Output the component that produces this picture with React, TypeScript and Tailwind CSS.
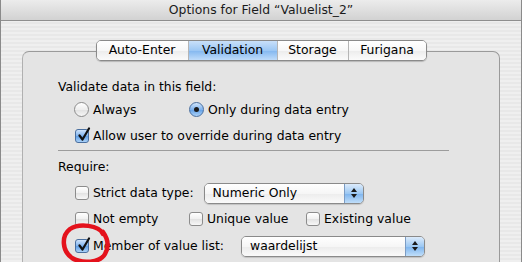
import React from "react";

const font = "font-['DejaVu_Sans',sans-serif] text-[12.4px] text-black";

function Check({ checked = false }: { checked?: boolean }) {
  return (
    <span
      className={
        "relative inline-block w-[14px] h-[14px] shrink-0 rounded-[3px] border " +
        (checked
          ? "border-[#4a6f9f] bg-[linear-gradient(#cfe3fa,#7fb3ee_50%,#5f9ee6_51%,#a9d0f7)]"
          : "border-[#8c8c8c] bg-[linear-gradient(#ffffff,#f0f0f0_50%,#e2e2e2_51%,#f7f7f7)]")
      }
    >
      {checked && (
        <svg className="absolute -top-[3px] left-[1px]" width="14" height="15" viewBox="0 0 14 15">
          <path d="M2.5 8.5 L5.5 12.5 L12 1.5" fill="none" stroke="#111" strokeWidth="2.2" strokeLinecap="round" strokeLinejoin="round" />
        </svg>
      )}
    </span>
  );
}

function Radio({ on = false }: { on?: boolean }) {
  return (
    <span
      className={
        "inline-flex items-center justify-center w-[15px] h-[15px] shrink-0 rounded-full border " +
        (on
          ? "border-[#4a6f9f] bg-[linear-gradient(#d2e6fb,#7fb3ee_50%,#5f9ee6_51%,#acd2f8)]"
          : "border-[#8c8c8c] bg-[linear-gradient(#ffffff,#eeeeee_50%,#e0e0e0_51%,#f7f7f7)]")
      }
    >
      {on && <span className="w-[5px] h-[5px] rounded-full bg-[#1a1a1a]" />}
    </span>
  );
}

function Popup({ label, width }: { label: string; width: string }) {
  return (
    <div className={"flex h-[21px] rounded-[5px] border border-[#8a8a8a] overflow-hidden shadow-[0_1px_1px_rgba(0,0,0,0.15)] " + width}>
      <div className="flex-1 flex items-center pl-[8px] bg-[linear-gradient(#ffffff,#f6f6f6_50%,#ececec_51%,#fafafa)]">
        {label}
      </div>
      <div className="w-[19px] flex flex-col items-center justify-center gap-[2px] border-l border-[#7b9cc4] bg-[linear-gradient(#dcebfb,#9cc8f3_50%,#7db4ee_51%,#c0def9)]">
        <svg width="6" height="4" viewBox="0 0 6 4"><path d="M0 4 L3 0 L6 4 Z" fill="#1a1a1a" /></svg>
        <svg width="6" height="4" viewBox="0 0 6 4"><path d="M0 0 L3 4 L6 0 Z" fill="#1a1a1a" /></svg>
      </div>
    </div>
  );
}

const tabs = [
  { name: "Auto-Enter", w: "w-[91px]" },
  { name: "Validation", w: "w-[89px]", on: true },
  { name: "Storage", w: "w-[71px]" },
  { name: "Furigana", w: "w-[78px]" },
];

export default function App() {
  return (
    <div className={"relative w-[522px] h-[262px] overflow-hidden border-x border-[#8a8a8a] bg-[repeating-linear-gradient(0deg,#efefef_0px,#efefef_2px,#e8e8e8_2px,#e8e8e8_4px)] " + font}>
      {/* title bar */}
      <div className="h-[21px] flex items-center justify-center border-b border-[#8f8f8f] bg-[linear-gradient(#ececec,#d2d2d2)] text-[#1b1b1b]">
        Options for Field “Valuelist_2”
      </div>

      {/* tabs */}
      <div className="relative z-10 mt-[19px] flex justify-center">
        <div className="flex h-[21px] rounded-[5px] border border-[#8a8a8a] overflow-hidden shadow-[0_1px_1px_rgba(0,0,0,0.2)]">
          {tabs.map((t, i) => (
            <div
              key={t.name}
              className={
                "flex items-center justify-center " +
                t.w +
                (i > 0 ? " border-l border-[#b5b5b5]" : "") +
                (t.on
                  ? " bg-[linear-gradient(#c9e0f9,#9cc7f4_50%,#83b7ef_51%,#bfdcfa)]"
                  : " bg-[linear-gradient(#ffffff,#f7f7f7_50%,#ececec_51%,#fbfbfb)]")
              }
            >
              {t.name}
            </div>
          ))}
        </div>
      </div>

      {/* group box */}
      <div className="-mt-[10px] mx-[21px] h-[230px] rounded-t-[7px] border border-b-0 border-[#9a9a9a] border-l-[#b0b0b0] bg-[#e4e4e4] pt-[25px] pl-[35px] pr-[50px]">
        <div className="h-[20px] flex items-center">Validate data in this field:</div>
        <div className="h-[26px] flex items-center pl-[16px]">
          <div className="w-[115px] flex items-center gap-[4px]">
            <Radio />
            Always
          </div>
          <div className="flex items-center gap-[4px]">
            <Radio on />
            Only during data entry
          </div>
        </div>
        <div className="h-[26px] flex items-center gap-[4px] pl-[17px]">
          <Check checked />
          Allow user to override during data entry
        </div>
        <div className="mt-[1px] h-px bg-[#9c9c9c]" />

        <div className="mt-[6px] h-[20px] flex items-center">Require:</div>
        <div className="mt-[4px] h-[24px] flex items-center pl-[17px]">
          <Check />
          <span className="ml-[4px] mr-[10px]">Strict data type:</span>
          <Popup label="Numeric Only" width="w-[160px]" />
        </div>
        <div className="mt-[2px] h-[24px] flex items-center pl-[17px]">
          <div className="w-[114px] flex items-center gap-[4px]">
            <Check />
            Not empty
          </div>
          <div className="w-[117px] flex items-center gap-[4px]">
            <Check />
            Unique value
          </div>
          <div className="flex items-center gap-[4px]">
            <Check />
            Existing value
          </div>
        </div>
        <div className="mt-[3px] h-[24px] flex items-center pl-[17px]">
          <Check checked />
          <span className="ml-[4px] w-[148px]">Member of value list:</span>
          <Popup label="waardelijst" width="w-[184px]" />
        </div>
      </div>

      {/* red marker annotation */}
      <svg className="absolute left-0 top-0 pointer-events-none" width="522" height="262" viewBox="0 0 522 262">
        <path
          d="M102 234 C98 225 78 223 69 229 C60 236 61 251 71 258 C81 264 99 263 104 254 C108 247 107 239 102 232"
          fill="none"
          stroke="#e4121c"
          strokeWidth="4.5"
          strokeLinecap="round"
        />
      </svg>
    </div>
  );
}
